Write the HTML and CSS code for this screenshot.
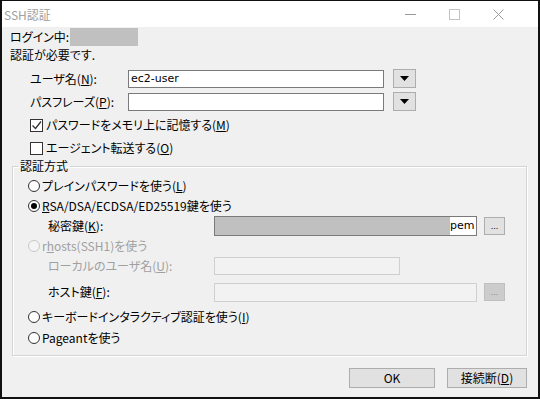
FILE: index.html
```html
<!DOCTYPE html>
<html lang="ja">
  <head>
    <meta charset="UTF-8" />
    <title>SSH認証</title>
    <link rel="stylesheet" href="styles.css">
  </head>
  <body>
    <div class="window">
      <div class="titlebar">
        <span class="title">SSH認証</span>
        <span class="cap-btn">
          <svg width="11" height="11" viewBox="0 0 11 11"><path d="M0 5.5h11" stroke="#9a9a9a" /></svg>
        </span>
        <span class="cap-btn">
          <svg width="11" height="11" viewBox="0 0 11 11"><rect x="0.5" y="0.5" width="10" height="10" fill="none" stroke="#c4c4c4" /></svg>
        </span>
        <span class="cap-btn">
          <svg width="11" height="11" viewBox="0 0 11 11"><path d="M0.5 0.5l10 10M10.5 0.5l-10 10" stroke="#9a9a9a" /></svg>
        </span>
      </div>

      <div class="client">
        <div class="login-row">
          <span>ログイン中:</span>
          <span class="masked"></span>
        </div>
        <div class="note">認証が必要です.</div>

        <div class="field user-row">
          <label class="lbl">ユーザ名(<u>N</u>):</label>
          <div class="edit">ec2-user</div>
          <button class="drop">
            <svg width="9" height="5" viewBox="0 0 9 5"><path d="M0 0h9L4.5 5z" fill="#000" /></svg>
          </button>
        </div>
        <div class="field pass-row">
          <label class="lbl">パスフレーズ(<u>P</u>):</label>
          <div class="edit"></div>
          <button class="drop">
            <svg width="9" height="5" viewBox="0 0 9 5"><path d="M0 0h9L4.5 5z" fill="#000" /></svg>
          </button>
        </div>

        <div class="check remember">
          <span class="box">
            <svg width="11" height="11" viewBox="0 0 11 11"><path d="M1.5 5.5l3 3 5.5-7" fill="none" stroke="#333" stroke-width="1.3" /></svg>
          </span>
          <span>パスワードをメモリ上に記憶する(<u>M</u>)</span>
        </div>
        <div class="check agent">
          <span class="box"></span>
          <span>エージェント転送する(<u>O</u>)</span>
        </div>

        <fieldset class="group">
          <legend>認証方式</legend>
          <div class="opt">
            <span class="radio"></span>
            <span>プレインパスワードを使う(<u>L</u>)</span>
          </div>
          <div class="opt">
            <span class="radio on"></span>
            <span><u>R</u>SA/DSA/ECDSA/ED25519鍵を使う</span>
          </div>
          <div class="sub">
            <span class="sub-lbl">秘密鍵(<u>K</u>):</span>
            <div class="keyfile">
              <span class="key-mask"></span>
              <span class="key-ext">pem</span>
            </div>
            <button class="browse">...</button>
          </div>
          <div class="opt disabled">
            <span class="radio"></span>
            <span>r<u>h</u>osts(SSH1)を使う</span>
          </div>
          <div class="sub local-row disabled">
            <span class="sub-lbl">ローカルのユーザ名(<u>U</u>):</span>
            <div class="edit off local"></div>
          </div>
          <div class="sub host-row">
            <span class="sub-lbl">ホスト鍵(<u>F</u>):</span>
            <div class="edit off host"></div>
            <button class="browse off">...</button>
          </div>
          <div class="opt kbd">
            <span class="radio"></span>
            <span>キーボードインタラクティブ認証を使う(<u>I</u>)</span>
          </div>
          <div class="opt pageant">
            <span class="radio"></span>
            <span>Pageantを使う</span>
          </div>
        </fieldset>

        <div class="footer">
          <button class="push ok">OK</button>
          <button class="push cancel">接続断(<u>D</u>)</button>
        </div>
      </div>
    </div>
  </body>
</html>
```

FILE: styles.css
```css
body {
  margin: 0;
  font-family: "Noto Sans CJK JP", sans-serif;
  font-size: 12px;
  font-feature-settings: "palt";
  color: #000;
  background-color: #fff;
}
u {
  text-underline-offset: 1px;
}
.window {
  width: 540px;
  height: 399px;
  box-sizing: border-box;
  border: 2px solid #111;
  border-top-width: 1px;
  display: flex;
  flex-direction: column;
  background-color: #f0f0f0;
}
.titlebar {
  height: 26px;
  flex: none;
  display: flex;
  align-items: center;
  background-color: #fff;
  padding: 0 18px 0 2px;
  color: #a0a0a0;
}
.title {
  flex: 1;
  font-size: 12px;
}
.cap-btn {
  width: 44px;
  height: 26px;
  display: flex;
  align-items: center;
  justify-content: center;
}
.cap-btn:first-of-type {
  margin-right: -2px;
}
.client {
  flex: 1;
  padding: 0 11px 0 8px;
  line-height: 18px;
}
.login-row {
  margin-top: 1px;
  height: 18px;
  display: flex;
  align-items: center;
}
.masked {
  width: 68px;
  height: 18px;
  margin-left: 1px;
  background-color: #c0c0c0;
}
.note {
  height: 18px;
}

/* user / passphrase */
.field {
  display: flex;
  align-items: center;
  height: 19px;
  padding-left: 20px;
}
.user-row {
  margin-top: 5px;
}
.pass-row {
  margin-top: 4px;
}
.lbl {
  width: 98px;
}
.edit {
  width: 256px;
  height: 18px;
  box-sizing: border-box;
  border: 1px solid #7a7a7a;
  background-color: #fff;
  padding-left: 2px;
  font-family: "DejaVu Sans", sans-serif;
  font-size: 11px;
  line-height: 16px;
}
.drop {
  width: 23px;
  height: 19px;
  margin-left: 9px;
  padding: 0;
  border: 1px solid #adadad;
  background-color: #e1e1e1;
  display: flex;
  align-items: center;
  justify-content: center;
}

/* checkboxes */
.check {
  display: flex;
  align-items: center;
  height: 18px;
  padding-left: 20px;
}
.remember {
  margin-top: 5px;
}
.agent {
  margin-top: 5px;
}
.box {
  width: 13px;
  height: 13px;
  box-sizing: border-box;
  border: 1px solid #333;
  background-color: #fff;
  margin-right: 3px;
  display: flex;
  align-items: center;
  justify-content: center;
}

/* auth method group */
.group {
  margin: 2px 0 0 2px;
  padding: 3px 0 7px 15px;
  border: 1px solid #d5d5d5;
  box-shadow: inset 1px 1px 0 #fff, 1px 1px 0 #fff;
}
.group legend {
  margin-left: -10px;
  padding: 0 2px;
  line-height: 14px;
}
.opt {
  display: flex;
  align-items: center;
  height: 20px;
}
.radio {
  width: 12px;
  height: 12px;
  box-sizing: border-box;
  border: 1px solid #333;
  border-radius: 50%;
  background-color: #fff;
  margin-right: 2px;
  display: flex;
  align-items: center;
  justify-content: center;
}
.radio.on::after {
  content: "";
  width: 6px;
  height: 6px;
  border-radius: 50%;
  background-color: #000;
}
.disabled {
  color: #a0a0a0;
}
.disabled .radio {
  border-color: #c8c8c8;
  background-color: #f4f4f4;
}
.sub {
  display: flex;
  align-items: center;
  height: 20px;
  padding-left: 20px;
}
.sub-lbl {
  width: 166px;
}
.keyfile {
  width: 263px;
  height: 20px;
  box-sizing: border-box;
  border: 1px solid #7a7a7a;
  display: flex;
}
.key-mask {
  flex: 1;
  background-color: #c0c0c0;
}
.key-ext {
  width: 26px;
  background-color: #fff;
  font-family: "DejaVu Sans", sans-serif;
  font-size: 11px;
  line-height: 18px;
}
.browse {
  width: 21px;
  height: 18px;
  margin-left: 7px;
  padding: 0 0 3px;
  border: 1px solid #adadad;
  background-color: #e1e1e1;
  font-size: 9px;
  line-height: 9px;
  color: #000;
  display: flex;
  align-items: flex-end;
  justify-content: center;
}
.edit.off {
  border-color: #cfcfcf;
  background-color: #f2f2f2;
}
.edit.local {
  width: 186px;
}
.edit.host {
  width: 263px;
  height: 19px;
}
.browse.off {
  background-color: #cccccc;
  border-color: #bfbfbf;
  color: #8a8a8a;
}
.host-row {
  margin-top: 6px;
}
.kbd {
  margin-top: 5px;
}
.pageant {
  margin-top: 1px;
}

/* dialog buttons */
.footer {
  display: flex;
  justify-content: flex-end;
  gap: 12px;
  margin-top: 12px;
}
.push {
  height: 20px;
  padding: 0;
  border: 1px solid #adadad;
  background-color: #e1e1e1;
  font-family: "Noto Sans CJK JP", sans-serif;
  font-size: 12px;
  font-feature-settings: "palt";
  line-height: 18px;
  color: #000;
}
.ok {
  width: 86px;
}
.cancel {
  width: 80px;
}
```
